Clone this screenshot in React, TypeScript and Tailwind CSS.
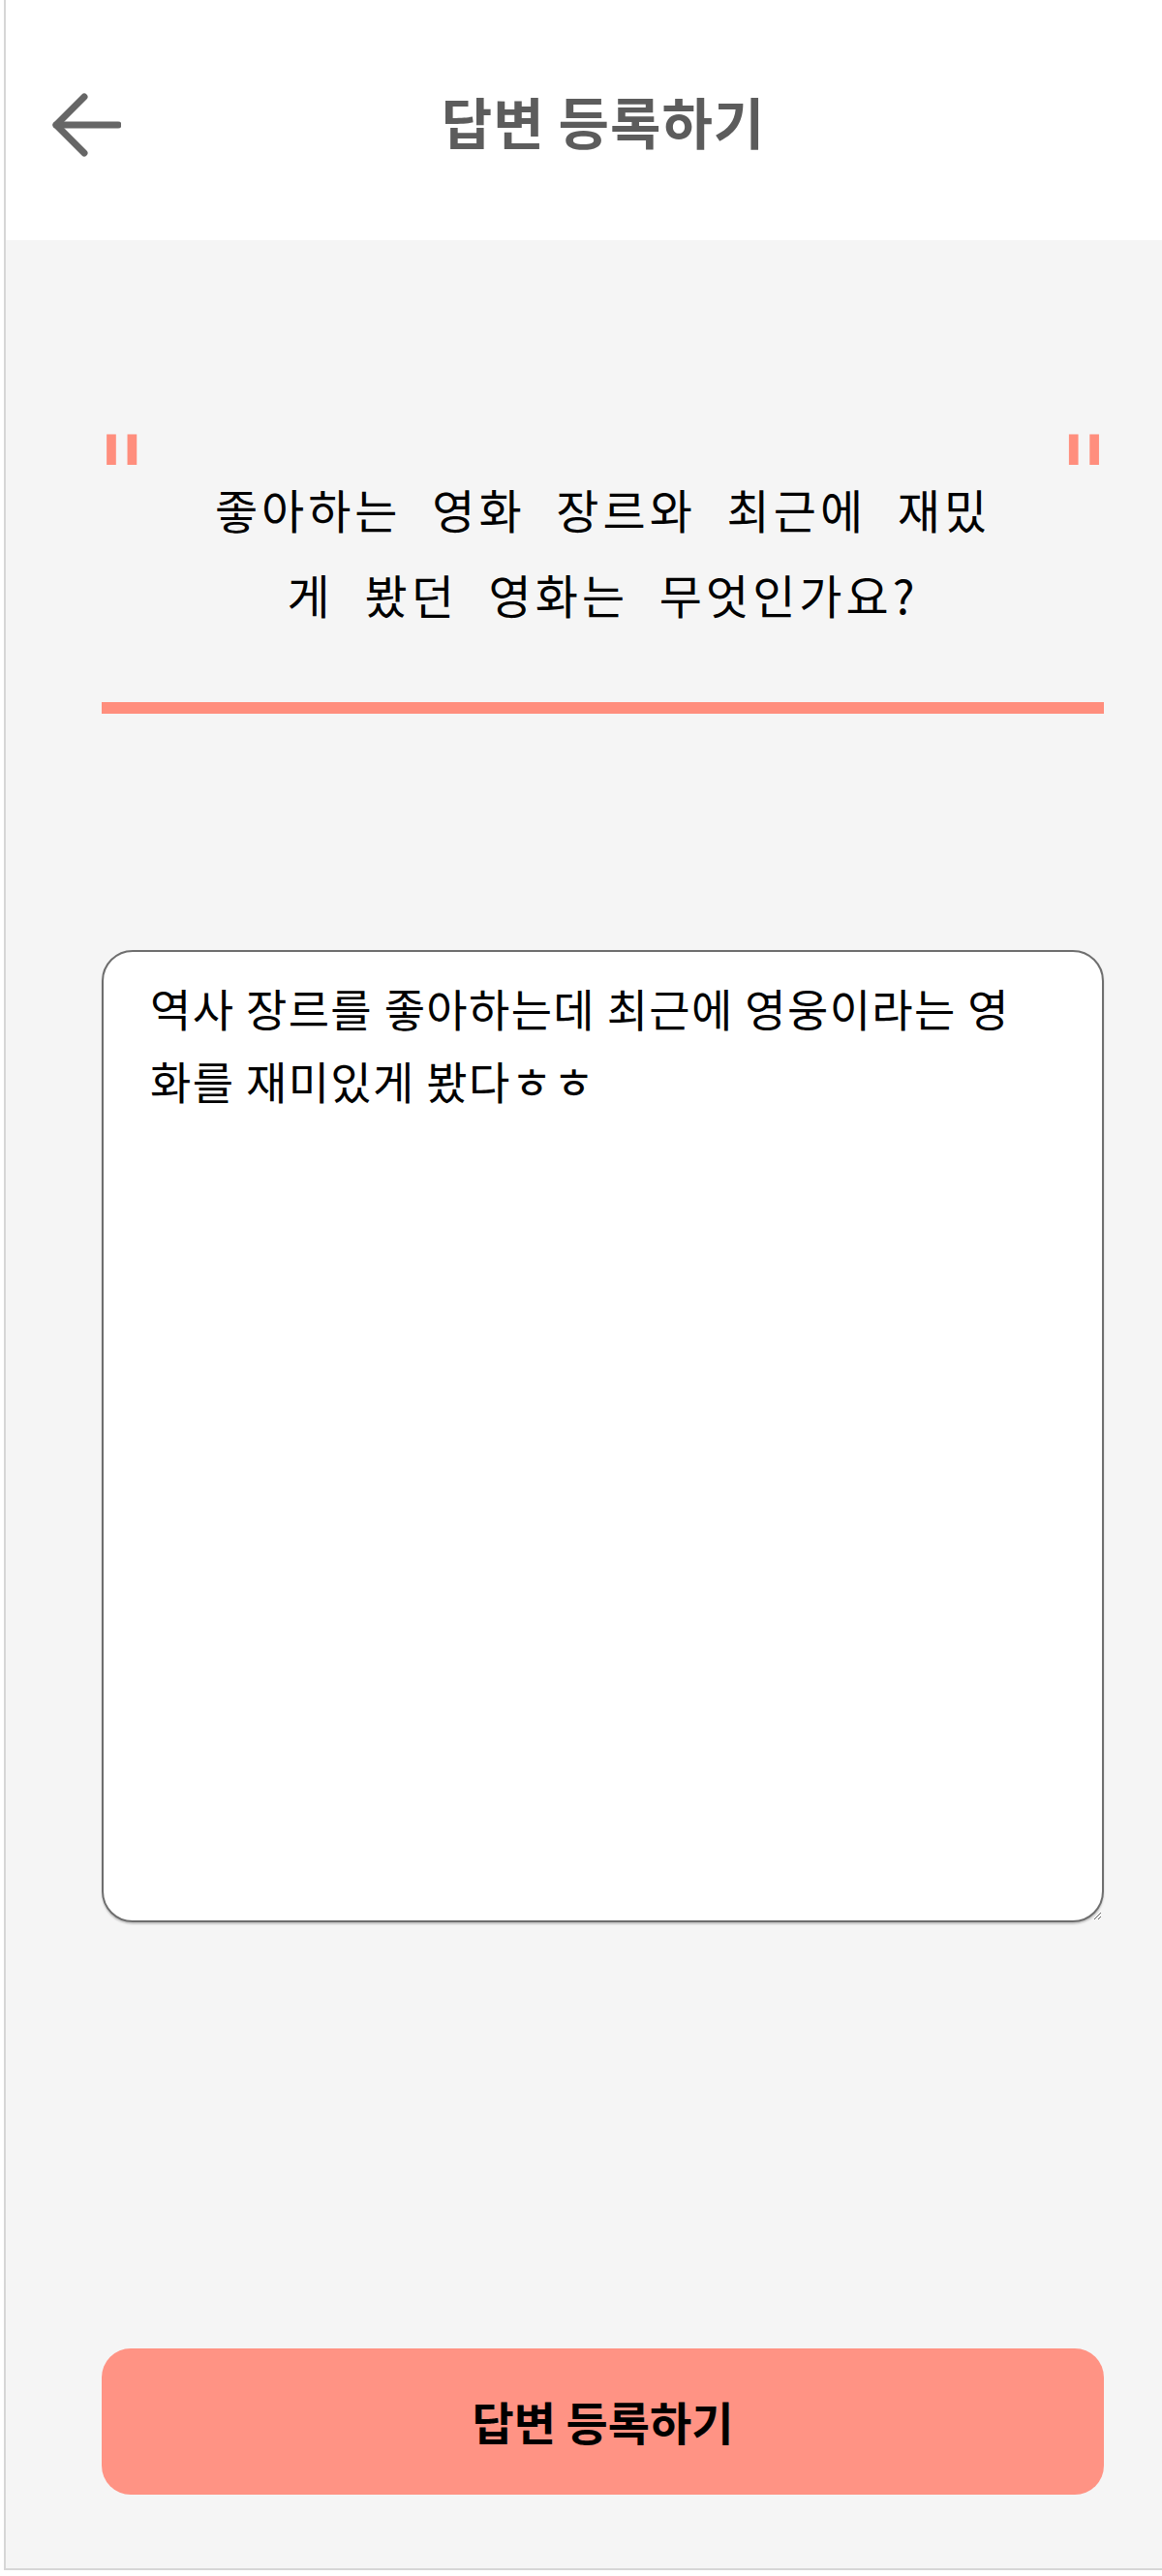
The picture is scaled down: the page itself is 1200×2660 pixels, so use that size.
import { useState } from 'react';

const QUESTION_LINES = ['좋아하는 영화 장르와 최근에 재밌', '게 봤던 영화는 무엇인가요?'];

function BackArrow() {
  return (
    <svg width="72" height="66" viewBox="0 0 72 66" fill="none" stroke="#666666" strokeWidth="7" strokeLinecap="round" strokeLinejoin="round">
      <path d="M34 4 5 33l29 29" />
      <path d="M5 33h64" />
    </svg>
  );
}

export default function App() {
  const [answer, setAnswer] = useState('역사 장르를 좋아하는데 최근에 영웅이라는 영화를 재미있게 봤다ㅎㅎ');

  return (
    <div className="w-[1200px] h-[2660px] overflow-hidden bg-white" style={{ fontFamily: '"Noto Sans CJK KR", "Noto Sans", sans-serif' }}>
      <div className="ml-[4px] w-[1236px] h-[2654px] border-l-2 border-b-2 border-[#d6d6d6] bg-[#f5f5f5] flex flex-col">
        {/* Header */}
        <header className="h-[248px] shrink-0 bg-white grid grid-cols-[200px_1fr_200px] items-center">
          <button className="ml-[47px] mt-[10px] w-[72px] h-[66px]">
            <BackArrow />
          </button>
          <h1 className="text-center text-[57px] font-bold leading-none tracking-[1px] text-[#5c5c5c]">답변 등록하기</h1>
          <div />
        </header>

        {/* Body */}
        <main className="flex-1 flex flex-col pl-[99px] pr-[100px] pt-[187px]">
          <div className="-mx-[6px] h-[36px] flex justify-between leading-none text-[116px] text-[#ff8e7d]" style={{ fontFamily: '"DejaVu Sans", sans-serif' }}>
            <span>"</span>
            <span>"</span>
          </div>
          <p className="mt-[10px] text-center text-[48px] leading-[88px] tracking-[4px] [word-spacing:17px] text-black">
            {QUESTION_LINES.map((line) => (
              <span key={line} className="block">{line}</span>
            ))}
          </p>
          <div className="mt-[68px] h-[12px] bg-[#ff8e7d]" />

          <textarea
            value={answer}
            onChange={(e) => setAnswer(e.target.value)}
            className="mt-[244px] w-full h-[1004px] rounded-[32px] border-2 border-[#6e6e6e] bg-white pl-[48px] pr-[60px] pt-[20px] text-[46px] leading-[75px] tracking-[1.35px] text-black outline-none shadow-[0_2px_2px_rgba(0,0,0,0.2)]"
          />

          <button className="mt-[440px] h-[151px] w-full rounded-[30px] bg-[#ff9384] text-[47px] font-bold text-black">
            답변 등록하기
          </button>
        </main>
      </div>
    </div>
  );
}
